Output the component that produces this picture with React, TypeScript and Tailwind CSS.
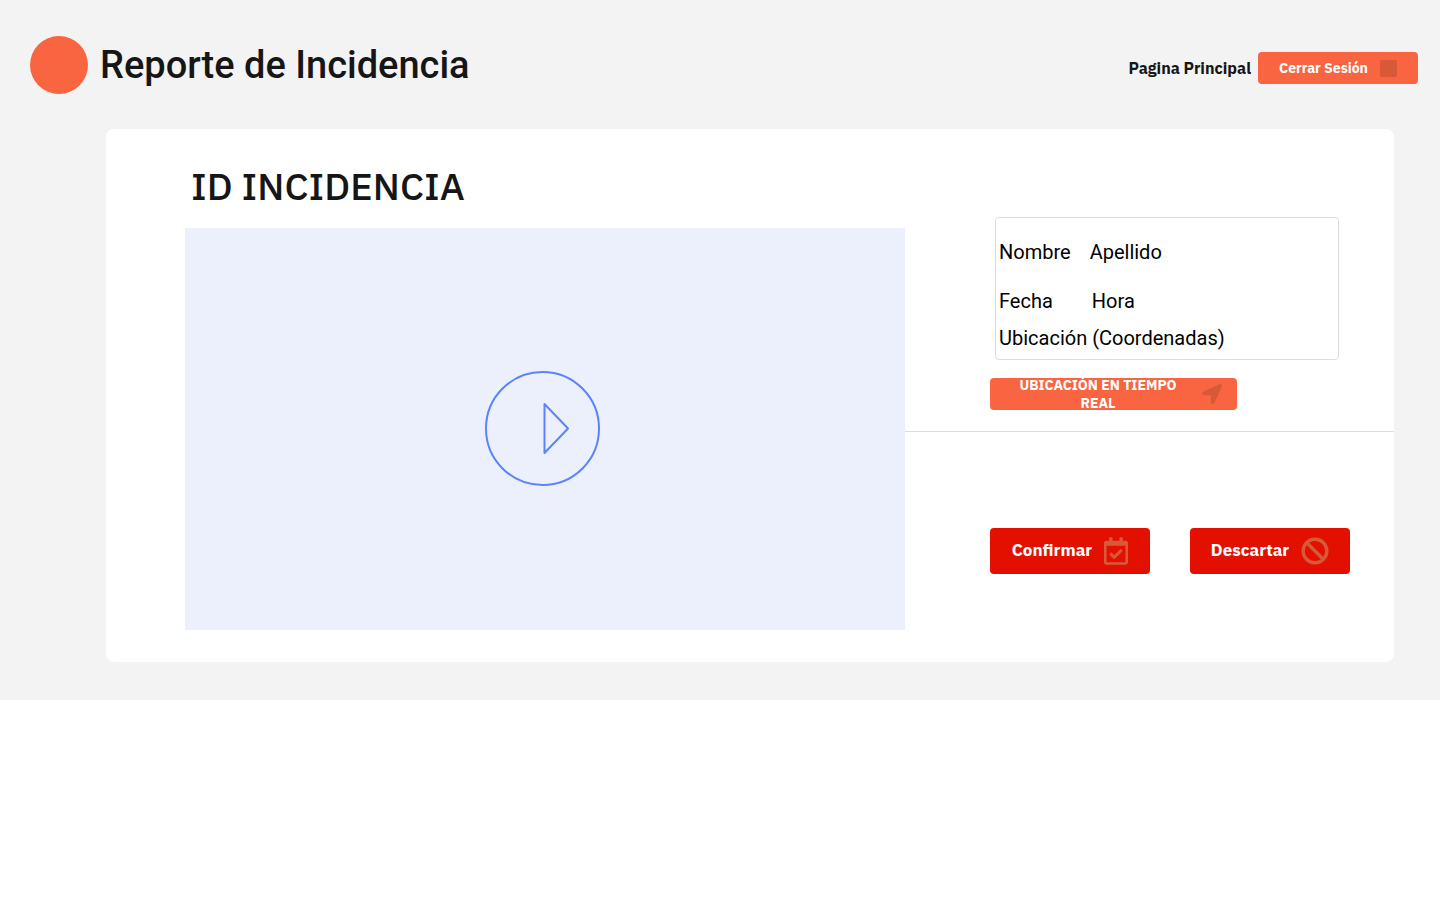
import type { ReactNode } from "react";
import { FaBan, FaLocationArrow, FaRegCalendarCheck } from "react-icons/fa";

function ActionButton({ label, icon }: { label: string; icon: ReactNode }) {
  return (
    <button
      type="button"
      className="flex h-[46px] w-40 items-center justify-center gap-3 rounded bg-[#e31000] text-[17px] font-bold text-white"
    >
      {label}
      {icon}
    </button>
  );
}

function PlayIcon() {
  return (
    <svg viewBox="0 0 115 115" className="size-[115px]" fill="none" stroke="#5c83fb" strokeWidth="2" aria-hidden="true">
      <circle cx="57.5" cy="57.5" r="56.5" />
      <path d="M59.5 33V82L83 57.5Z" strokeLinejoin="round" />
    </svg>
  );
}

export default function App() {
  return (
    <div className="min-h-screen bg-white font-['IBM_Plex_Sans','Noto_Sans',sans-serif] text-[#161616]">
      <div className="bg-[#f3f3f3] pb-[38px]">
        <header className="flex items-center justify-between pt-9 pr-[22px] pb-[35px] pl-[30px]">
          <div className="flex items-center gap-3">
            <span className="size-[58px] rounded-full bg-[#f86540]" />
            <h1 className="font-['Roboto',sans-serif] text-[38px] leading-[46px] font-medium">Reporte de Incidencia</h1>
          </div>
          <nav className="flex items-center gap-[7px] pt-1.5">
            <a href="#" className="text-base leading-6 font-bold">
              Pagina Principal
            </a>
            <button
              type="button"
              className="flex h-8 w-40 items-center justify-center gap-3 rounded bg-[#f86540] text-sm font-bold text-white"
            >
              Cerrar Sesión
              <span className="size-[17px] rounded-xs bg-[#d75938]" />
            </button>
          </nav>
        </header>

        <main className="mr-[46px] ml-[106px] flex rounded-lg bg-white">
          <section className="min-w-0 flex-1 pb-8 pl-[79px]">
            <h2 className="flex h-[99px] items-center pt-3.5 pl-1.5 text-[38px] leading-[48px] font-medium">
              ID INCIDENCIA
            </h2>
            <button
              type="button"
              aria-label="Reproducir video"
              className="flex h-[402px] w-full items-center justify-center bg-[#ecf0fd] pr-[5px] pb-px"
            >
              <PlayIcon />
            </button>
          </section>

          <section className="w-[489px] shrink-0">
            <div className="border-b border-[#dddddd] pt-22 pb-[21px] pl-[85px]">
              <div className="ml-[5px] flex h-[143px] w-[344px] flex-col rounded border border-[#dddddd] pt-[22px] pl-[3px] font-['Roboto',sans-serif] text-xl leading-6 text-black">
                <div className="flex gap-[19px]">
                  <span>Nombre</span>
                  <span>Apellido</span>
                </div>
                <div className="mt-[25px] flex gap-[39px]">
                  <span>Fecha</span>
                  <span>Hora</span>
                </div>
                <p className="mt-[13px]">Ubicación (Coordenadas)</p>
              </div>
              <button
                type="button"
                className="mt-[18px] flex h-8 w-[247px] items-center justify-between rounded bg-[#f86540] pr-[15px] pl-5 text-sm leading-[18px] font-bold text-white"
              >
                <span className="w-44 text-center">UBICACIÓN EN TIEMPO REAL</span>
                <FaLocationArrow className="size-5 text-[#d75938]" aria-hidden="true" />
              </button>
            </div>
            <div className="flex gap-10 pt-24 pl-[85px]">
              <ActionButton
                label="Confirmar"
                icon={<FaRegCalendarCheck className="h-7 w-6 text-[#d75938]" aria-hidden="true" />}
              />
              <ActionButton label="Descartar" icon={<FaBan className="size-7 text-[#d75938]" aria-hidden="true" />} />
            </div>
          </section>
        </main>
      </div>
    </div>
  );
}
